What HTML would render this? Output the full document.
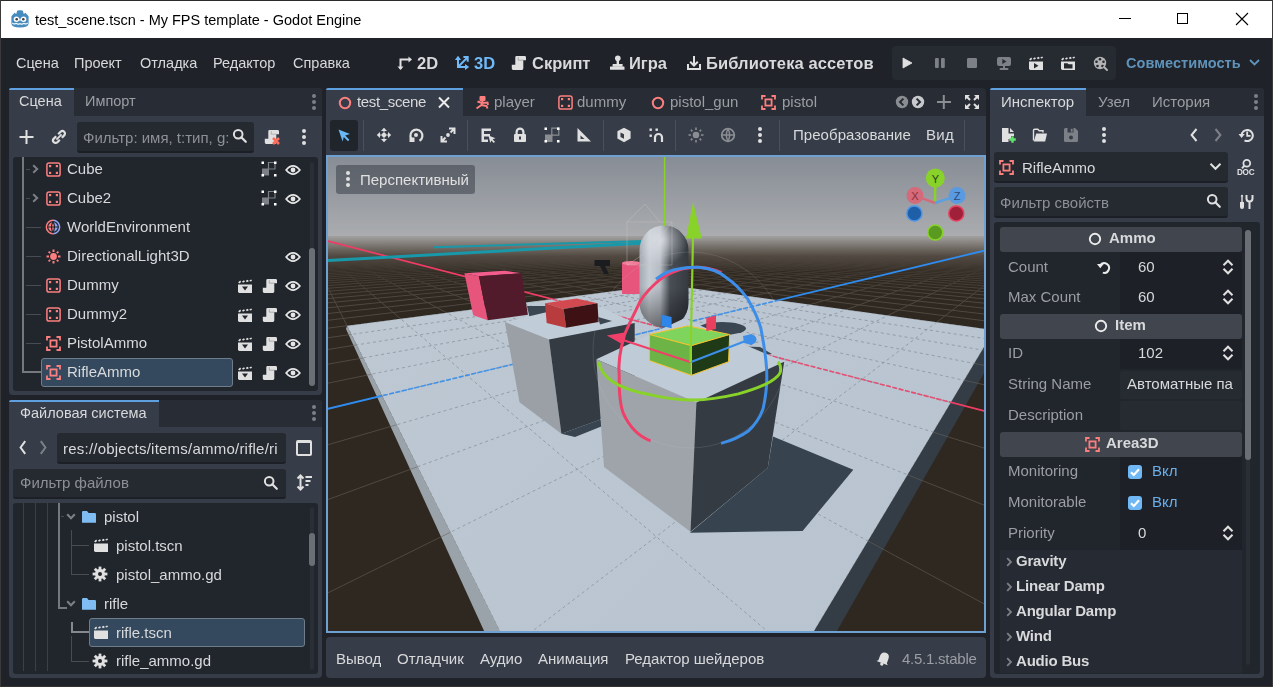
<!DOCTYPE html><html><head><meta charset="utf-8"><style>
html,body{margin:0;padding:0;width:1273px;height:687px;overflow:hidden;background:#1f2228}
body>div,body>svg{position:absolute}
div{position:absolute;box-sizing:border-box}
.t{white-space:pre;line-height:normal;font-family:"Liberation Sans",sans-serif;will-change:transform}
</style></head><body>
<div style="left:0px;top:0px;width:1273px;height:687px;background:#1f2228;border-radius:0px;"></div>
<div style="left:0px;top:0px;width:1273px;height:1px;background:#2b2b2b;border-radius:0px;"></div>
<div style="left:0px;top:1px;width:1273px;height:37px;background:#ffffff;border-radius:0px;"></div>
<div style="left:0px;top:0px;width:1px;height:687px;background:#3a3a3a;border-radius:0px;"></div>
<div style="left:0px;top:686px;width:1273px;height:1px;background:#34322f;border-radius:0px;"></div>
<div style="left:1272px;top:0px;width:1px;height:687px;background:#3a3a3a;border-radius:0px;"></div>
<svg style="position:absolute;left:10px;top:9px;" width="20" height="20" viewBox="0 0 20 20"><path fill="#478cbf" d="M2.5,6 L4.6,3.8 L6.2,5 L7.2,1.8 L9,1.2 L11,1.2 L12.8,1.8 L13.8,5 L15.4,3.8 L17.5,6 L18.6,7.2 V14.5 Q18.6,18.6 10,18.6 Q1.4,18.6 1.4,14.5 V7.2 Z"/>
<circle cx="6.4" cy="10.2" r="2.7" fill="#fff"/><circle cx="13.6" cy="10.2" r="2.7" fill="#fff"/>
<circle cx="6.7" cy="10.3" r="1.3" fill="#414042"/><circle cx="13.3" cy="10.3" r="1.3" fill="#414042"/>
<rect x="9.3" y="9.6" width="1.4" height="2.2" fill="#fff"/>
<path d="M2,13.4 Q4,15 6,13.8 Q8,15.2 10,14 Q12,15.2 14,13.8 Q16,15 18,13.4 V14.6 Q16,16.2 14,15 Q12,16.3 10,15.2 Q8,16.3 6,15 Q4,16.2 2,14.6Z" fill="#fff"/></svg>
<div class="t" style="left:35px;top:11.88px;font-size:14.5px;color:#000000;">test_scene.tscn - My FPS template - Godot Engine</div>
<div style="left:1119px;top:18px;width:12px;height:1px;background:#000;border-radius:0px;"></div>
<div style="left:1177px;top:13px;width:11px;height:11px;background:transparent;border-radius:0px;border:1px solid #000;box-sizing:border-box;"></div>
<svg style="position:absolute;left:1235px;top:12px;" width="14" height="14" viewBox="0 0 14 14"><path d="M1 1 L13 13 M13 1 L1 13" stroke="#000" stroke-width="1.1"/></svg>
<div class="t" style="left:16px;top:55.18px;font-size:14.5px;color:#d8d9db;">Сцена</div>
<div class="t" style="left:74px;top:55.18px;font-size:14.5px;color:#d8d9db;">Проект</div>
<div class="t" style="left:140px;top:55.18px;font-size:14.5px;color:#d8d9db;">Отладка</div>
<div class="t" style="left:213px;top:55.18px;font-size:14.5px;color:#d8d9db;">Редактор</div>
<div class="t" style="left:293px;top:55.18px;font-size:14.5px;color:#d8d9db;">Справка</div>
<svg style="position:absolute;left:396px;top:54px;" width="18" height="18" viewBox="0 0 18 18"><path d="M4.5,15 V5.5 H14" stroke="#e0e0e0" stroke-width="2" fill="none"/><path d="M1.5,12.5 L4.5,16 L7.5,12.5Z" fill="#e0e0e0"/><path d="M12.5,2.5 L16,5.5 L12.5,8.5Z" fill="#e0e0e0"/></svg>
<div class="t" style="left:416.5px;top:53.57px;font-size:16.5px;color:#d8d9db;font-weight:bold;">2D</div>
<svg style="position:absolute;left:452px;top:53px;" width="20" height="20" viewBox="0 0 20 20"><path d="M6,4.5 V14 H15 M6,14 L15.2,4.6 M11.4,4.1 H15.7 V8.7" stroke="#70baf8" stroke-width="2" fill="none"/><path d="M2.9,6.9 L6,2.8 L9.1,6.9Z M13,10.9 L17.2,14 L13,17.1Z" fill="#70baf8"/></svg>
<div class="t" style="left:474px;top:53.57px;font-size:16.5px;color:#70baf8;font-weight:bold;">3D</div>
<svg style="position:absolute;left:511px;top:55px;" width="16" height="16" viewBox="0 0 16 16"><path d="M5.6,1 H13.6 Q15,1 15,2.4 V5.2 H12.3 V13.6 Q12.3,15 10.9,15 H2.2 Q0.8,15 0.8,13.6 V9.8 H4.3 V2.3 Q4.3,1 5.6,1 Z" fill="#e0e0e0"/><path d="M7.3,2.2 V5.2 H12.3" stroke="#1f2228" stroke-width="0.8" fill="none" opacity="0.35"/></svg>
<div class="t" style="left:531.5px;top:53.57px;font-size:16.5px;color:#d8d9db;font-weight:bold;">Скрипт</div>
<svg style="position:absolute;left:609px;top:55px;" width="16" height="16" viewBox="0 0 16 16"><circle cx="8.8" cy="3.3" r="2.8" fill="#e0e0e0"/><rect x="7.6" y="5" width="2.4" height="5" fill="#e0e0e0"/><rect x="3.6" y="9" width="10" height="2.8" rx="0.5" fill="#e0e0e0"/><rect x="1" y="11.4" width="14.5" height="3.4" rx="0.5" fill="#e0e0e0"/></svg>
<div class="t" style="left:629.2px;top:53.57px;font-size:16.5px;color:#d8d9db;font-weight:bold;">Игра</div>
<svg style="position:absolute;left:686px;top:55px;" width="16" height="16" viewBox="0 0 16 16"><path d="M8,1 V10.5 M4.2,6.8 L8,10.6 L11.8,6.8 M2,9 V14 H14 V9" stroke="#e0e0e0" stroke-width="2" fill="none"/></svg>
<div class="t" style="left:706px;top:53.57px;font-size:16.5px;color:#d8d9db;font-weight:bold;letter-spacing:0.1px;">Библиотека ассетов</div>
<div style="left:892px;top:46px;width:224px;height:34px;background:#262a31;border-radius:4px;"></div>
<svg style="position:absolute;left:902px;top:57px;" width="11" height="12" viewBox="0 0 11 12"><path d="M1,1 L10,6 L1,11Z" fill="#e0e0e0" stroke="#e0e0e0" stroke-width="0.8" stroke-linejoin="round"/></svg>
<svg style="position:absolute;left:934px;top:57px;" width="12" height="12" viewBox="0 0 12 12"><rect x="1" y="1" width="3.8" height="10" rx="1" fill="#7d8086"/><rect x="7" y="1" width="3.8" height="10" rx="1" fill="#7d8086"/></svg>
<svg style="position:absolute;left:966px;top:57px;" width="12" height="12" viewBox="0 0 12 12"><rect x="1" y="1" width="10" height="10" rx="1.2" fill="#7d8086"/></svg>
<svg style="position:absolute;left:996px;top:56px;" width="16" height="15" viewBox="0 0 16 15"><rect x="1" y="1" width="14" height="9" rx="2" fill="#7d8086"/><path d="M6.3,3 L10.5,5.5 L6.3,8Z" fill="#262a31"/><rect x="7" y="10" width="2" height="2.5" fill="#7d8086"/><rect x="3.5" y="12" width="9" height="2" rx="1" fill="#7d8086"/></svg>
<svg style="position:absolute;left:1028px;top:56px;" width="16" height="15" viewBox="0 0 16 15"><path d="M1.2,3.2 L3.2,1.6 L4.2,3 L2.2,4.4Z M5,2.4 L7,1.2 L8,2.6 L6,3.8Z M8.8,1.8 L10.8,0.8 L11.8,2.2 L9.8,3.2Z M12.4,1.2 L14.4,0.4 L15,2 L13,2.6Z" fill="#e0e0e0"/><path d="M1,5.6 H15 V14 H2.4 Q1,14 1,12.6 Z" fill="#e0e0e0"/><path d="M6,7 L10.5,9.8 L6,12.6Z" fill="#262a31"/></svg>
<svg style="position:absolute;left:1060px;top:56px;" width="16" height="15" viewBox="0 0 16 15"><path d="M1.2,3.2 L3.2,1.6 L4.2,3 L2.2,4.4Z M5,2.4 L7,1.2 L8,2.6 L6,3.8Z M8.8,1.8 L10.8,0.8 L11.8,2.2 L9.8,3.2Z M12.4,1.2 L14.4,0.4 L15,2 L13,2.6Z" fill="#e0e0e0"/><path d="M1,5.6 H15 V14 H2.4 Q1,14 1,12.6 Z" fill="#e0e0e0"/><path d="M4,7.2 H7.5 L8.5,8.3 H12.5 V12.5 H4Z" fill="#262a31"/></svg>
<svg style="position:absolute;left:1093px;top:56px;" width="16" height="16" viewBox="0 0 16 16"><circle cx="7" cy="7" r="6.2" fill="#b4b4b4"/><circle cx="7" cy="3.3" r="1.3" fill="#262a31"/><circle cx="3.5" cy="5.8" r="1.3" fill="#262a31"/><circle cx="10.5" cy="5.8" r="1.3" fill="#262a31"/><circle cx="4.5" cy="10" r="1.3" fill="#262a31"/><circle cx="9.5" cy="10" r="1.3" fill="#262a31"/><path d="M11,11 L14,14" stroke="#b4b4b4" stroke-width="2" stroke-linecap="round"/></svg>
<div class="t" style="left:1126px;top:54.68px;font-size:14.5px;color:#5f93ba;font-weight:bold;letter-spacing:0.05px;">Совместимость</div>
<svg style="position:absolute;left:1249px;top:59px;" width="11" height="7" viewBox="0 0 11 7"><path d="M1,1 L5.5,5.5 L10,1" stroke="#5f93ba" stroke-width="1.8" fill="none"/></svg>
<div style="left:9px;top:88px;width:313px;height:307px;background:#363c48;border-radius:4px;"></div>
<div style="left:9px;top:88px;width:313px;height:28px;background:#282c34;border-radius:4px;border-radius:4px 4px 0 0;"></div>
<div style="left:9px;top:88px;width:65px;height:28px;background:#363c48;border-radius:0px;border-radius:4px 0 0 0;"></div>
<div style="left:9px;top:88px;width:65px;height:2px;background:#5fa0e0;border-radius:0px;border-radius:2px 0 0 0;"></div>
<div class="t" style="left:19px;top:93.38px;font-size:14.5px;color:#d8d9db;">Сцена</div>
<div class="t" style="left:85px;top:93.38px;font-size:14.5px;color:#9b9ea3;">Импорт</div>
<div style="left:312px;top:94px;width:4px;height:4px;background:#7d8086;border-radius:2.0px;"></div>
<div style="left:312px;top:100px;width:4px;height:4px;background:#7d8086;border-radius:2.0px;"></div>
<div style="left:312px;top:106px;width:4px;height:4px;background:#7d8086;border-radius:2.0px;"></div>
<svg style="position:absolute;left:19px;top:129px;" width="16" height="16" viewBox="0 0 16 16"><path d="M7.5,1 V15 M0.5,8 H14.5" stroke="#e0e0e0" stroke-width="2"/></svg>
<svg style="position:absolute;left:51px;top:129px;" width="16" height="16" viewBox="0 0 16 16"><path d="M5.4,10.6 L10.6,5.4" stroke="#e0e0e0" stroke-width="1.8"/><path d="M7.2,5.2 L9.6,2.8 A2.4,2.4 0 0 1 13.2,6.4 L10.8,8.8" stroke="#e0e0e0" stroke-width="2.2" fill="none"/><path d="M8.8,10.8 L6.4,13.2 A2.4,2.4 0 0 1 2.8,9.6 L5.2,7.2" stroke="#e0e0e0" stroke-width="2.2" fill="none"/></svg>
<div style="left:77px;top:122px;width:177px;height:31px;background:#252a31;border-radius:3px;border-bottom:2px solid #1c1f25;"></div>
<div class="t" style="left:82.5px;top:128.93px;font-size:15px;color:#8d9095;">Фильтр: имя, t:тип, g:</div>
<svg style="position:absolute;left:232px;top:128px;" width="16" height="16" viewBox="0 0 16 16"><circle cx="6.2" cy="6.2" r="4.3" fill="none" stroke="#e0e0e0" stroke-width="2"/><path d="M9.3,9.3 L13.8,13.8" stroke="#e0e0e0" stroke-width="2.2" stroke-linecap="round"/></svg>
<svg style="position:absolute;left:264px;top:129px;" width="16" height="16" viewBox="0 0 16 16"><path d="M5.6,1 H13.6 Q15,1 15,2.4 V5.2 H12.3 V13.6 Q12.3,15 10.9,15 H2.2 Q0.8,15 0.8,13.6 V9.8 H4.3 V2.3 Q4.3,1 5.6,1 Z" fill="#e0e0e0"/><path d="M7.3,2.2 V5.2 H12.3" stroke="#363c48" stroke-width="0.8" fill="none" opacity="0.35"/></svg>
<svg style="position:absolute;left:271px;top:136px;" width="10" height="10" viewBox="0 0 10 10"><path d="M2,2 L8,8 M8,2 L2,8" stroke="#ff6d5a" stroke-width="2.6"/></svg>
<div style="left:302px;top:129px;width:4px;height:4px;background:#e0e0e0;border-radius:2.0px;"></div>
<div style="left:302px;top:135px;width:4px;height:4px;background:#e0e0e0;border-radius:2.0px;"></div>
<div style="left:302px;top:141px;width:4px;height:4px;background:#e0e0e0;border-radius:2.0px;"></div>
<div style="left:13px;top:157px;width:305px;height:234px;background:#21252c;border-radius:3px;"></div>
<div style="left:310px;top:162px;width:4px;height:224px;background:#2a2e36;border-radius:2px;"></div>
<div style="left:309px;top:248px;width:6px;height:138px;background:#6a6e75;border-radius:3px;"></div>
<div style="left:22px;top:157px;width:2px;height:216px;background:#75787d;border-radius:0px;"></div>
<div style="left:26px;top:169px;width:4px;height:1px;background:#474b52;border-radius:0px;"></div>
<svg style="position:absolute;left:31px;top:164px;" width="9" height="10" viewBox="0 0 9 10"><path d="M2.2,1.2 L6.2,5 L2.2,8.8" stroke="#7d8086" stroke-width="2" fill="none"/></svg>
<svg style="position:absolute;left:45.5px;top:161.5px;" width="15" height="15" viewBox="0 0 15 15"><rect x="0.9" y="0.9" width="13.2" height="13.2" rx="2.2" fill="none" stroke="#fc7f7f" stroke-width="1.5"/><rect x="3" y="3" width="2.2" height="2.2" fill="#fc7f7f"/><rect x="9.8" y="3" width="2.2" height="2.2" fill="#fc7f7f"/><rect x="3" y="9.8" width="2.2" height="2.2" fill="#fc7f7f"/><rect x="9.8" y="9.8" width="2.2" height="2.2" fill="#fc7f7f"/></svg>
<div class="t" style="left:67px;top:160.23px;font-size:15px;color:#d8d9db;">Cube</div>
<svg style="position:absolute;left:261px;top:161px;" width="16" height="16" viewBox="0 0 16 16"><rect x="1" y="7.5" width="7" height="7" fill="#7d8086"/><path d="M7.5,1.5 H14 V8 H7.5Z" fill="none" stroke="#7d8086" stroke-width="1.2"/><rect x="0.5" y="0.5" width="2.5" height="2.5" fill="#fff"/><rect x="13" y="0.5" width="2.5" height="2.5" fill="#fff"/><rect x="13" y="13" width="2.5" height="2.5" fill="#fff"/><rect x="0.5" y="13" width="2.5" height="2.5" fill="#fff"/></svg>
<svg style="position:absolute;left:285px;top:162.5px;" width="16" height="14" viewBox="0 0 16 14"><path d="M1.2,7 Q8,-1.2 14.8,7 Q8,15.2 1.2,7 Z" fill="none" stroke="#e6e6e6" stroke-width="1.9"/><circle cx="8" cy="7" r="2.4" fill="#e6e6e6"/></svg>
<div style="left:26px;top:198px;width:4px;height:1px;background:#474b52;border-radius:0px;"></div>
<svg style="position:absolute;left:31px;top:193px;" width="9" height="10" viewBox="0 0 9 10"><path d="M2.2,1.2 L6.2,5 L2.2,8.8" stroke="#7d8086" stroke-width="2" fill="none"/></svg>
<svg style="position:absolute;left:45.5px;top:190.5px;" width="15" height="15" viewBox="0 0 15 15"><rect x="0.9" y="0.9" width="13.2" height="13.2" rx="2.2" fill="none" stroke="#fc7f7f" stroke-width="1.5"/><rect x="3" y="3" width="2.2" height="2.2" fill="#fc7f7f"/><rect x="9.8" y="3" width="2.2" height="2.2" fill="#fc7f7f"/><rect x="3" y="9.8" width="2.2" height="2.2" fill="#fc7f7f"/><rect x="9.8" y="9.8" width="2.2" height="2.2" fill="#fc7f7f"/></svg>
<div class="t" style="left:67px;top:189.23px;font-size:15px;color:#d8d9db;">Cube2</div>
<svg style="position:absolute;left:261px;top:190px;" width="16" height="16" viewBox="0 0 16 16"><rect x="1" y="7.5" width="7" height="7" fill="#7d8086"/><path d="M7.5,1.5 H14 V8 H7.5Z" fill="none" stroke="#7d8086" stroke-width="1.2"/><rect x="0.5" y="0.5" width="2.5" height="2.5" fill="#fff"/><rect x="13" y="0.5" width="2.5" height="2.5" fill="#fff"/><rect x="13" y="13" width="2.5" height="2.5" fill="#fff"/><rect x="0.5" y="13" width="2.5" height="2.5" fill="#fff"/></svg>
<svg style="position:absolute;left:285px;top:191.5px;" width="16" height="14" viewBox="0 0 16 14"><path d="M1.2,7 Q8,-1.2 14.8,7 Q8,15.2 1.2,7 Z" fill="none" stroke="#e6e6e6" stroke-width="1.9"/><circle cx="8" cy="7" r="2.4" fill="#e6e6e6"/></svg>
<div style="left:26px;top:227px;width:15px;height:1px;background:#474b52;border-radius:0px;"></div>
<svg style="position:absolute;left:45px;top:219px;" width="16" height="16" viewBox="0 0 16 16"><path d="M8,0.6 A7.4,7.4 0 0 0 8,15.4Z" fill="#fc7f7f"/><path d="M8,0.6 A7.4,7.4 0 0 1 8,15.4Z" fill="#8da5f3"/><circle cx="8" cy="8" r="5.3" fill="none" stroke="#21252c" stroke-width="1.2"/><path d="M8,2.6 Q5,8 8,13.4 Q11,8 8,2.6 M2.6,8 H13.4" stroke="#21252c" stroke-width="1.2" fill="none"/></svg>
<div class="t" style="left:67px;top:218.23px;font-size:15px;color:#d8d9db;">WorldEnvironment</div>
<div style="left:26px;top:256px;width:15px;height:1px;background:#474b52;border-radius:0px;"></div>
<svg style="position:absolute;left:45.5px;top:248.5px;" width="15" height="15" viewBox="0 0 15 15"><circle cx="7.5" cy="7.5" r="3.4" fill="#fc7f7f"/><path d="M7.5,0.5 V3 M7.5,12 V14.5 M0.5,7.5 H3 M12,7.5 H14.5" stroke="#fc7f7f" stroke-width="2"/><path d="M2.6,2.6 L4.2,4.2 M10.8,10.8 L12.4,12.4 M2.6,12.4 L4.2,10.8 M10.8,4.2 L12.4,2.6" stroke="#fc7f7f" stroke-width="1.8"/></svg>
<div class="t" style="left:67px;top:247.23px;font-size:15px;color:#d8d9db;">DirectionalLight3D</div>
<svg style="position:absolute;left:285px;top:249.5px;" width="16" height="14" viewBox="0 0 16 14"><path d="M1.2,7 Q8,-1.2 14.8,7 Q8,15.2 1.2,7 Z" fill="none" stroke="#e6e6e6" stroke-width="1.9"/><circle cx="8" cy="7" r="2.4" fill="#e6e6e6"/></svg>
<div style="left:26px;top:285px;width:15px;height:1px;background:#474b52;border-radius:0px;"></div>
<svg style="position:absolute;left:45.5px;top:277.5px;" width="15" height="15" viewBox="0 0 15 15"><rect x="0.9" y="0.9" width="13.2" height="13.2" rx="2.2" fill="none" stroke="#fc7f7f" stroke-width="1.5"/><rect x="3" y="3" width="2.2" height="2.2" fill="#fc7f7f"/><rect x="9.8" y="3" width="2.2" height="2.2" fill="#fc7f7f"/><rect x="3" y="9.8" width="2.2" height="2.2" fill="#fc7f7f"/><rect x="9.8" y="9.8" width="2.2" height="2.2" fill="#fc7f7f"/></svg>
<div class="t" style="left:67px;top:276.23px;font-size:15px;color:#d8d9db;">Dummy</div>
<svg style="position:absolute;left:237px;top:278.5px;" width="16" height="15" viewBox="0 0 16 15"><path d="M1.2,3.2 L3.2,1.6 L4.2,3 L2.2,4.4Z M5,2.4 L7,1.2 L8,2.6 L6,3.8Z M8.8,1.8 L10.8,0.8 L11.8,2.2 L9.8,3.2Z M12.4,1.2 L14.4,0.4 L15,2 L13,2.6Z" fill="#e0e0e0"/><path d="M1,5.6 H15 V14 H2.4 Q1,14 1,12.6 Z" fill="#e0e0e0"/><path d="M5,7.6 H11 L8,11.4 Z" fill="#21252c"/></svg>
<svg style="position:absolute;left:261.5px;top:277.5px;" width="16" height="16" viewBox="0 0 16 16"><path d="M5.6,1 H13.6 Q15,1 15,2.4 V5.2 H12.3 V13.6 Q12.3,15 10.9,15 H2.2 Q0.8,15 0.8,13.6 V9.8 H4.3 V2.3 Q4.3,1 5.6,1 Z" fill="#e0e0e0"/><path d="M7.3,2.2 V5.2 H12.3" stroke="#21252c" stroke-width="0.8" fill="none" opacity="0.35"/></svg>
<svg style="position:absolute;left:285px;top:278.5px;" width="16" height="14" viewBox="0 0 16 14"><path d="M1.2,7 Q8,-1.2 14.8,7 Q8,15.2 1.2,7 Z" fill="none" stroke="#e6e6e6" stroke-width="1.9"/><circle cx="8" cy="7" r="2.4" fill="#e6e6e6"/></svg>
<div style="left:26px;top:314px;width:15px;height:1px;background:#474b52;border-radius:0px;"></div>
<svg style="position:absolute;left:45.5px;top:306.5px;" width="15" height="15" viewBox="0 0 15 15"><rect x="0.9" y="0.9" width="13.2" height="13.2" rx="2.2" fill="none" stroke="#fc7f7f" stroke-width="1.5"/><rect x="3" y="3" width="2.2" height="2.2" fill="#fc7f7f"/><rect x="9.8" y="3" width="2.2" height="2.2" fill="#fc7f7f"/><rect x="3" y="9.8" width="2.2" height="2.2" fill="#fc7f7f"/><rect x="9.8" y="9.8" width="2.2" height="2.2" fill="#fc7f7f"/></svg>
<div class="t" style="left:67px;top:305.23px;font-size:15px;color:#d8d9db;">Dummy2</div>
<svg style="position:absolute;left:237px;top:307.5px;" width="16" height="15" viewBox="0 0 16 15"><path d="M1.2,3.2 L3.2,1.6 L4.2,3 L2.2,4.4Z M5,2.4 L7,1.2 L8,2.6 L6,3.8Z M8.8,1.8 L10.8,0.8 L11.8,2.2 L9.8,3.2Z M12.4,1.2 L14.4,0.4 L15,2 L13,2.6Z" fill="#e0e0e0"/><path d="M1,5.6 H15 V14 H2.4 Q1,14 1,12.6 Z" fill="#e0e0e0"/><path d="M5,7.6 H11 L8,11.4 Z" fill="#21252c"/></svg>
<svg style="position:absolute;left:261.5px;top:306.5px;" width="16" height="16" viewBox="0 0 16 16"><path d="M5.6,1 H13.6 Q15,1 15,2.4 V5.2 H12.3 V13.6 Q12.3,15 10.9,15 H2.2 Q0.8,15 0.8,13.6 V9.8 H4.3 V2.3 Q4.3,1 5.6,1 Z" fill="#e0e0e0"/><path d="M7.3,2.2 V5.2 H12.3" stroke="#21252c" stroke-width="0.8" fill="none" opacity="0.35"/></svg>
<svg style="position:absolute;left:285px;top:307.5px;" width="16" height="14" viewBox="0 0 16 14"><path d="M1.2,7 Q8,-1.2 14.8,7 Q8,15.2 1.2,7 Z" fill="none" stroke="#e6e6e6" stroke-width="1.9"/><circle cx="8" cy="7" r="2.4" fill="#e6e6e6"/></svg>
<div style="left:26px;top:343px;width:15px;height:1px;background:#474b52;border-radius:0px;"></div>
<svg style="position:absolute;left:45.5px;top:335.5px;" width="15" height="15" viewBox="0 0 15 15"><path d="M1,4.5 V1 H4.5 M10.5,1 H14 V4.5 M14,10.5 V14 H10.5 M4.5,14 H1 V10.5" stroke="#fc7f7f" stroke-width="1.8" fill="none"/><rect x="4.4" y="4.4" width="6.2" height="6.2" fill="none" stroke="#fc7f7f" stroke-width="1.8"/></svg>
<div class="t" style="left:67px;top:334.23px;font-size:15px;color:#d8d9db;">PistolAmmo</div>
<svg style="position:absolute;left:237px;top:336.5px;" width="16" height="15" viewBox="0 0 16 15"><path d="M1.2,3.2 L3.2,1.6 L4.2,3 L2.2,4.4Z M5,2.4 L7,1.2 L8,2.6 L6,3.8Z M8.8,1.8 L10.8,0.8 L11.8,2.2 L9.8,3.2Z M12.4,1.2 L14.4,0.4 L15,2 L13,2.6Z" fill="#e0e0e0"/><path d="M1,5.6 H15 V14 H2.4 Q1,14 1,12.6 Z" fill="#e0e0e0"/><path d="M5,7.6 H11 L8,11.4 Z" fill="#21252c"/></svg>
<svg style="position:absolute;left:261.5px;top:335.5px;" width="16" height="16" viewBox="0 0 16 16"><path d="M5.6,1 H13.6 Q15,1 15,2.4 V5.2 H12.3 V13.6 Q12.3,15 10.9,15 H2.2 Q0.8,15 0.8,13.6 V9.8 H4.3 V2.3 Q4.3,1 5.6,1 Z" fill="#e0e0e0"/><path d="M7.3,2.2 V5.2 H12.3" stroke="#21252c" stroke-width="0.8" fill="none" opacity="0.35"/></svg>
<svg style="position:absolute;left:285px;top:336.5px;" width="16" height="14" viewBox="0 0 16 14"><path d="M1.2,7 Q8,-1.2 14.8,7 Q8,15.2 1.2,7 Z" fill="none" stroke="#e6e6e6" stroke-width="1.9"/><circle cx="8" cy="7" r="2.4" fill="#e6e6e6"/></svg>
<div style="left:41px;top:358px;width:192px;height:29px;background:#34495e;border-radius:3px;border:1px solid #6f7d8b;"></div>
<div style="left:22px;top:371px;width:20px;height:2px;background:#75787d;border-radius:0px;"></div>
<svg style="position:absolute;left:45.5px;top:364.5px;" width="15" height="15" viewBox="0 0 15 15"><path d="M1,4.5 V1 H4.5 M10.5,1 H14 V4.5 M14,10.5 V14 H10.5 M4.5,14 H1 V10.5" stroke="#fc7f7f" stroke-width="1.8" fill="none"/><rect x="4.4" y="4.4" width="6.2" height="6.2" fill="none" stroke="#fc7f7f" stroke-width="1.8"/></svg>
<div class="t" style="left:67px;top:363.23px;font-size:15px;color:#d8d9db;">RifleAmmo</div>
<svg style="position:absolute;left:237px;top:365.5px;" width="16" height="15" viewBox="0 0 16 15"><path d="M1.2,3.2 L3.2,1.6 L4.2,3 L2.2,4.4Z M5,2.4 L7,1.2 L8,2.6 L6,3.8Z M8.8,1.8 L10.8,0.8 L11.8,2.2 L9.8,3.2Z M12.4,1.2 L14.4,0.4 L15,2 L13,2.6Z" fill="#e0e0e0"/><path d="M1,5.6 H15 V14 H2.4 Q1,14 1,12.6 Z" fill="#e0e0e0"/><path d="M5,7.6 H11 L8,11.4 Z" fill="#21252c"/></svg>
<svg style="position:absolute;left:261.5px;top:364.5px;" width="16" height="16" viewBox="0 0 16 16"><path d="M5.6,1 H13.6 Q15,1 15,2.4 V5.2 H12.3 V13.6 Q12.3,15 10.9,15 H2.2 Q0.8,15 0.8,13.6 V9.8 H4.3 V2.3 Q4.3,1 5.6,1 Z" fill="#e0e0e0"/><path d="M7.3,2.2 V5.2 H12.3" stroke="#21252c" stroke-width="0.8" fill="none" opacity="0.35"/></svg>
<svg style="position:absolute;left:285px;top:365.5px;" width="16" height="14" viewBox="0 0 16 14"><path d="M1.2,7 Q8,-1.2 14.8,7 Q8,15.2 1.2,7 Z" fill="none" stroke="#e6e6e6" stroke-width="1.9"/><circle cx="8" cy="7" r="2.4" fill="#e6e6e6"/></svg>
<div style="left:9px;top:400px;width:313px;height:278px;background:#363c48;border-radius:4px;"></div>
<div style="left:9px;top:400px;width:313px;height:27px;background:#282c34;border-radius:4px;border-radius:4px 4px 0 0;"></div>
<div style="left:9px;top:400px;width:150px;height:27px;background:#363c48;border-radius:0px;border-radius:4px 0 0 0;"></div>
<div style="left:9px;top:400px;width:150px;height:2px;background:#5fa0e0;border-radius:0px;border-radius:2px 0 0 0;"></div>
<div class="t" style="left:20px;top:405.38px;font-size:14.5px;color:#d8d9db;">Файловая система</div>
<div style="left:312px;top:405px;width:4px;height:4px;background:#7d8086;border-radius:2.0px;"></div>
<div style="left:312px;top:411px;width:4px;height:4px;background:#7d8086;border-radius:2.0px;"></div>
<div style="left:312px;top:417px;width:4px;height:4px;background:#7d8086;border-radius:2.0px;"></div>
<svg style="position:absolute;left:18px;top:440px;" width="10" height="16" viewBox="0 0 10 16"><path d="M7.2,1.2 L2.6,7.5 L7.2,13.8" stroke="#e0e0e0" stroke-width="2" fill="none"/></svg>
<svg style="position:absolute;left:38px;top:440px;" width="10" height="16" viewBox="0 0 10 16"><path d="M2.8,1.2 L7.4,7.5 L2.8,13.8" stroke="#7d8086" stroke-width="2" fill="none"/></svg>
<div style="left:57px;top:433px;width:229px;height:31px;background:#252a31;border-radius:3px;border-bottom:2px solid #1c1f25;"></div>
<div class="t" style="left:63px;top:440.03px;font-size:15px;color:#d8d9db;letter-spacing:0.22px;">res://objects/items/ammo/rifle/ri</div>
<div style="left:296px;top:440px;width:16px;height:16px;background:transparent;border-radius:2px;border:2px solid #e0e0e0;border-top-width:3.5px;"></div>
<div style="left:13px;top:469px;width:273px;height:30px;background:#252a31;border-radius:3px;border-bottom:2px solid #1c1f25;"></div>
<div class="t" style="left:19.5px;top:474.43px;font-size:15px;color:#8d9095;">Фильтр файлов</div>
<svg style="position:absolute;left:263px;top:475px;" width="16" height="16" viewBox="0 0 16 16"><circle cx="6.2" cy="6.2" r="4.3" fill="none" stroke="#e0e0e0" stroke-width="2"/><path d="M9.3,9.3 L13.8,13.8" stroke="#e0e0e0" stroke-width="2.2" stroke-linecap="round"/></svg>
<svg style="position:absolute;left:296px;top:474px;" width="17" height="17" viewBox="0 0 17 17"><path d="M4.5,1.5 V15.5 M1.5,4.5 L4.5,1.5 L7.5,4.5 M1.5,12.5 L4.5,15.5 L7.5,12.5 M9.5,3 H16 M9.5,7 H14.5 M9.5,11 H12.5" stroke="#e0e0e0" stroke-width="2" fill="none"/></svg>
<div style="left:13px;top:503px;width:305px;height:171px;background:#21252c;border-radius:3px;"></div>
<div style="left:310px;top:507px;width:4px;height:163px;background:#2a2e36;border-radius:2px;"></div>
<div style="left:309px;top:533px;width:6px;height:33px;background:#6a6e75;border-radius:3px;"></div>
<div style="left:23px;top:503px;width:1px;height:168px;background:#3b3f46;border-radius:0px;"></div>
<div style="left:35px;top:503px;width:1px;height:168px;background:#3b3f46;border-radius:0px;"></div>
<div style="left:47px;top:503px;width:1px;height:168px;background:#3b3f46;border-radius:0px;"></div>
<div style="left:58px;top:503px;width:2px;height:106px;background:#75787d;border-radius:0px;"></div>
<div style="left:58px;top:607px;width:9px;height:2px;background:#75787d;border-radius:0px;"></div>
<div style="left:61px;top:516px;width:3px;height:1px;background:#474b52;border-radius:0px;"></div>
<div style="left:71px;top:530px;width:1px;height:45px;background:#474b52;border-radius:0px;"></div>
<div style="left:71px;top:545px;width:18px;height:1px;background:#474b52;border-radius:0px;"></div>
<div style="left:71px;top:574px;width:18px;height:1px;background:#474b52;border-radius:0px;"></div>
<div style="left:71px;top:622px;width:2px;height:11px;background:#85888d;border-radius:0px;"></div>
<div style="left:71px;top:631px;width:18px;height:2px;background:#85888d;border-radius:0px;"></div>
<div style="left:71px;top:636px;width:1px;height:26px;background:#474b52;border-radius:0px;"></div>
<div style="left:71px;top:661px;width:18px;height:1px;background:#474b52;border-radius:0px;"></div>
<svg style="position:absolute;left:66px;top:512px;" width="10" height="9" viewBox="0 0 10 9"><path d="M1.2,2.2 L5,6.2 L8.8,2.2" stroke="#7d8086" stroke-width="2" fill="none"/></svg>
<svg style="position:absolute;left:81px;top:510px;" width="16" height="14" viewBox="0 0 16 14"><path d="M1,2.2 Q1,1 2.2,1 H6 L7.6,3 H13.8 Q15,3 15,4.2 V12.8 H1 Z" fill="#7fbcf2"/></svg>
<div class="t" style="left:103.8px;top:508.32px;font-size:15px;color:#d8d9db;">pistol</div>
<svg style="position:absolute;left:93px;top:538px;" width="16" height="15" viewBox="0 0 16 15"><path d="M1.2,3.2 L3.2,1.6 L4.2,3 L2.2,4.4Z M5,2.4 L7,1.2 L8,2.6 L6,3.8Z M8.8,1.8 L10.8,0.8 L11.8,2.2 L9.8,3.2Z M12.4,1.2 L14.4,0.4 L15,2 L13,2.6Z" fill="#e0e0e0"/><path d="M1,5.6 H15 V14 H2.4 Q1,14 1,12.6 Z" fill="#e0e0e0"/></svg>
<div class="t" style="left:115.5px;top:537.32px;font-size:15px;color:#d8d9db;">pistol.tscn</div>
<svg style="position:absolute;left:92px;top:566px;" width="16" height="16" viewBox="0 0 16 16"><rect x="6.6" y="0.6" width="2.8" height="3.6" fill="#e0e0e0" transform="rotate(0 8 8)"/><rect x="6.6" y="0.6" width="2.8" height="3.6" fill="#e0e0e0" transform="rotate(45 8 8)"/><rect x="6.6" y="0.6" width="2.8" height="3.6" fill="#e0e0e0" transform="rotate(90 8 8)"/><rect x="6.6" y="0.6" width="2.8" height="3.6" fill="#e0e0e0" transform="rotate(135 8 8)"/><rect x="6.6" y="0.6" width="2.8" height="3.6" fill="#e0e0e0" transform="rotate(180 8 8)"/><rect x="6.6" y="0.6" width="2.8" height="3.6" fill="#e0e0e0" transform="rotate(225 8 8)"/><rect x="6.6" y="0.6" width="2.8" height="3.6" fill="#e0e0e0" transform="rotate(270 8 8)"/><rect x="6.6" y="0.6" width="2.8" height="3.6" fill="#e0e0e0" transform="rotate(315 8 8)"/><circle cx="8" cy="8" r="5" fill="#e0e0e0"/><circle cx="8" cy="8" r="2" fill="#21252c"/></svg>
<div class="t" style="left:115.5px;top:565.82px;font-size:15px;color:#d8d9db;">pistol_ammo.gd</div>
<svg style="position:absolute;left:66px;top:599px;" width="10" height="9" viewBox="0 0 10 9"><path d="M1.2,2.2 L5,6.2 L8.8,2.2" stroke="#7d8086" stroke-width="2" fill="none"/></svg>
<svg style="position:absolute;left:81px;top:597px;" width="16" height="14" viewBox="0 0 16 14"><path d="M1,2.2 Q1,1 2.2,1 H6 L7.6,3 H13.8 Q15,3 15,4.2 V12.8 H1 Z" fill="#7fbcf2"/></svg>
<div class="t" style="left:103.8px;top:594.82px;font-size:15px;color:#d8d9db;">rifle</div>
<div style="left:89px;top:618px;width:216px;height:29px;background:#34495e;border-radius:3px;border:1px solid #6f7d8b;"></div>
<svg style="position:absolute;left:93px;top:625px;" width="16" height="15" viewBox="0 0 16 15"><path d="M1.2,3.2 L3.2,1.6 L4.2,3 L2.2,4.4Z M5,2.4 L7,1.2 L8,2.6 L6,3.8Z M8.8,1.8 L10.8,0.8 L11.8,2.2 L9.8,3.2Z M12.4,1.2 L14.4,0.4 L15,2 L13,2.6Z" fill="#e0e0e0"/><path d="M1,5.6 H15 V14 H2.4 Q1,14 1,12.6 Z" fill="#e0e0e0"/></svg>
<div class="t" style="left:115.5px;top:623.82px;font-size:15px;color:#d8d9db;">rifle.tscn</div>
<svg style="position:absolute;left:92px;top:653px;" width="16" height="16" viewBox="0 0 16 16"><rect x="6.6" y="0.6" width="2.8" height="3.6" fill="#e0e0e0" transform="rotate(0 8 8)"/><rect x="6.6" y="0.6" width="2.8" height="3.6" fill="#e0e0e0" transform="rotate(45 8 8)"/><rect x="6.6" y="0.6" width="2.8" height="3.6" fill="#e0e0e0" transform="rotate(90 8 8)"/><rect x="6.6" y="0.6" width="2.8" height="3.6" fill="#e0e0e0" transform="rotate(135 8 8)"/><rect x="6.6" y="0.6" width="2.8" height="3.6" fill="#e0e0e0" transform="rotate(180 8 8)"/><rect x="6.6" y="0.6" width="2.8" height="3.6" fill="#e0e0e0" transform="rotate(225 8 8)"/><rect x="6.6" y="0.6" width="2.8" height="3.6" fill="#e0e0e0" transform="rotate(270 8 8)"/><rect x="6.6" y="0.6" width="2.8" height="3.6" fill="#e0e0e0" transform="rotate(315 8 8)"/><circle cx="8" cy="8" r="5" fill="#e0e0e0"/><circle cx="8" cy="8" r="2" fill="#21252c"/></svg>
<div class="t" style="left:115.5px;top:652.42px;font-size:15px;color:#d8d9db;">rifle_ammo.gd</div>
<div style="left:326px;top:88px;width:660px;height:28px;background:#282c34;border-radius:4px;border-radius:4px 4px 0 0;"></div>
<div style="left:326px;top:88px;width:137px;height:28px;background:#363c48;border-radius:0px;border-radius:4px 0 0 0;"></div>
<div style="left:326px;top:88px;width:137px;height:2px;background:#5fa0e0;border-radius:0px;border-radius:2px 0 0 0;"></div>
<svg style="position:absolute;left:338px;top:95.5px;" width="14" height="14" viewBox="0 0 14 14"><circle cx="7" cy="7" r="5.2" fill="none" stroke="#fc7f7f" stroke-width="2"/></svg>
<div class="t" style="left:357px;top:93.22px;font-size:15px;color:#d8d9db;letter-spacing:-0.35px;">test_scene</div>
<svg style="position:absolute;left:437px;top:96px;" width="14" height="13" viewBox="0 0 14 13"><path d="M2,1.5 L12,11.5 M12,1.5 L2,11.5" stroke="#ececec" stroke-width="2"/></svg>
<svg style="position:absolute;left:475px;top:94.5px;" width="15" height="15" viewBox="0 0 15 15"><rect x="4.5" y="1" width="6" height="5" rx="1" fill="#fc7f7f"/><path d="M7.5,6 L6.5,10 L1.5,13.5 M6.5,10 L11.5,11 L12.5,13.5 M2.5,6.5 L7,8 L12.5,7.5 L13,10" stroke="#fc7f7f" stroke-width="2" fill="none"/></svg>
<div class="t" style="left:494.4px;top:93.22px;font-size:15px;color:#9b9ea3;">player</div>
<svg style="position:absolute;left:558px;top:94.5px;" width="15" height="15" viewBox="0 0 15 15"><rect x="0.9" y="0.9" width="13.2" height="13.2" rx="2.2" fill="none" stroke="#fc7f7f" stroke-width="1.5"/><rect x="3" y="3" width="2.2" height="2.2" fill="#fc7f7f"/><rect x="9.8" y="3" width="2.2" height="2.2" fill="#fc7f7f"/><rect x="3" y="9.8" width="2.2" height="2.2" fill="#fc7f7f"/><rect x="9.8" y="9.8" width="2.2" height="2.2" fill="#fc7f7f"/></svg>
<div class="t" style="left:577.3px;top:93.22px;font-size:15px;color:#9b9ea3;">dummy</div>
<svg style="position:absolute;left:651px;top:95.5px;" width="14" height="14" viewBox="0 0 14 14"><circle cx="7" cy="7" r="5.2" fill="none" stroke="#fc7f7f" stroke-width="2"/></svg>
<div class="t" style="left:670px;top:93.22px;font-size:15px;color:#9b9ea3;">pistol_gun</div>
<svg style="position:absolute;left:761px;top:94.5px;" width="15" height="15" viewBox="0 0 15 15"><path d="M1,4.5 V1 H4.5 M10.5,1 H14 V4.5 M14,10.5 V14 H10.5 M4.5,14 H1 V10.5" stroke="#fc7f7f" stroke-width="1.8" fill="none"/><rect x="4.4" y="4.4" width="6.2" height="6.2" fill="none" stroke="#fc7f7f" stroke-width="1.8"/></svg>
<div class="t" style="left:781.6px;top:93.22px;font-size:15px;color:#9b9ea3;">pistol</div>
<svg style="position:absolute;left:895px;top:95px;" width="14" height="14" viewBox="0 0 14 14"><circle cx="7" cy="7" r="6.2" fill="#8a8d92"/><path d="M8.4,3.6 L5,7 L8.4,10.4" stroke="#262a32" stroke-width="2" fill="none"/></svg>
<svg style="position:absolute;left:911px;top:95px;" width="14" height="14" viewBox="0 0 14 14"><circle cx="7" cy="7" r="6.2" fill="#c8c9cc"/><path d="M5.6,3.6 L9,7 L5.6,10.4" stroke="#262a32" stroke-width="2" fill="none"/></svg>
<svg style="position:absolute;left:936px;top:94px;" width="16" height="16" viewBox="0 0 16 16"><path d="M7.8,1 V15 M1,8 H15" stroke="#8a8d92" stroke-width="2"/></svg>
<svg style="position:absolute;left:964px;top:94px;" width="16" height="16" viewBox="0 0 16 16"><path d="M1,1 H6 L1,6Z M15,1 H10 L15,6Z M1,15 H6 L1,10Z M15,15 H10 L15,10Z" fill="#e0e0e0"/><path d="M2,2 L6,6 M14,2 L10,6 M2,14 L6,10 M14,14 L10,10" stroke="#e0e0e0" stroke-width="2"/></svg>
<div style="left:326px;top:116px;width:660px;height:40px;background:#363c48;border-radius:0px;"></div>
<div style="left:330px;top:120px;width:28px;height:31px;background:#20242b;border-radius:3px;"></div>
<svg style="position:absolute;left:336px;top:127px;" width="16" height="16" viewBox="0 0 16 16"><path d="M2.5,2.5 L14,7 L9.2,8.6 L13.4,12.8 L12,14.2 L7.8,10 L6.6,14.5Z" fill="#6ab7f5"/></svg>
<div style="left:363px;top:120px;width:1px;height:31px;background:#4b515c;border-radius:0px;"></div>
<div style="left:467px;top:120px;width:1px;height:31px;background:#4b515c;border-radius:0px;"></div>
<div style="left:603px;top:120px;width:1px;height:31px;background:#4b515c;border-radius:0px;"></div>
<div style="left:675px;top:120px;width:1px;height:31px;background:#4b515c;border-radius:0px;"></div>
<div style="left:779px;top:120px;width:1px;height:31px;background:#4b515c;border-radius:0px;"></div>
<div style="left:964px;top:120px;width:1px;height:31px;background:#4b515c;border-radius:0px;"></div>
<svg style="position:absolute;left:376px;top:127px;" width="16" height="16" viewBox="0 0 16 16"><circle cx="8" cy="8" r="2.2" fill="#e0e0e0"/><path d="M8,0.8 L11,4 H5Z M8,15.2 L11,12 H5Z M0.8,8 L4,5 V11Z M15.2,8 L12,5 V11Z" fill="#e0e0e0"/><path d="M8,3.5 V12.5 M3.5,8 H12.5" stroke="#e0e0e0" stroke-width="1"/></svg>
<svg style="position:absolute;left:408px;top:127px;" width="16" height="16" viewBox="0 0 16 16"><path d="M5,13.6 A6,6 0 1 1 11.5,13.8" stroke="#e0e0e0" stroke-width="2.2" fill="none"/><circle cx="8" cy="8" r="2" fill="#e0e0e0"/><path d="M1.5,10.5 H6.5 V15 H1.5Z" fill="#e0e0e0"/></svg>
<svg style="position:absolute;left:440px;top:127px;" width="16" height="16" viewBox="0 0 16 16"><path d="M9,1.5 H14.5 V7 M14.5,1.5 L10.5,5.5 M7,14.5 H1.5 V9 M1.5,14.5 L5.5,10.5" stroke="#e0e0e0" stroke-width="2" fill="none"/><circle cx="8" cy="8" r="1.9" fill="#e0e0e0"/></svg>
<svg style="position:absolute;left:480px;top:127px;" width="16" height="16" viewBox="0 0 16 16"><path d="M1.5,1.5 H11 V4 H4 V7 H10 V9.5 H4 V12.5 H8 V15 H1.5Z" fill="#e0e0e0"/><path d="M8.5,8.5 L15.5,11.2 L12.6,12.3 L15,14.7 L13.8,15.9 L11.4,13.5 L10.3,16Z" fill="#e0e0e0"/></svg>
<svg style="position:absolute;left:512px;top:127px;" width="16" height="16" viewBox="0 0 16 16"><path d="M4.6,7 V5 A3.4,3.4 0 0 1 11.4,5 V7" stroke="#e0e0e0" stroke-width="2.2" fill="none"/><rect x="2" y="7" width="12" height="8" rx="1" fill="#e0e0e0"/><rect x="7" y="9.5" width="2" height="3" fill="#363c48"/></svg>
<svg style="position:absolute;left:544px;top:127px;" width="16" height="16" viewBox="0 0 16 16"><rect x="1" y="7.5" width="7.5" height="7.5" fill="#8a8d92"/><path d="M7.8,1.2 H14.8 V8.2 H7.8Z" fill="none" stroke="#8a8d92" stroke-width="1.2"/><rect x="0.5" y="0.5" width="2.5" height="2.5" fill="#fff"/><rect x="13" y="0.5" width="2.5" height="2.5" fill="#fff"/><rect x="13" y="13" width="2.5" height="2.5" fill="#fff"/><rect x="0.5" y="13" width="2.5" height="2.5" fill="#fff"/></svg>
<svg style="position:absolute;left:576px;top:127px;" width="16" height="16" viewBox="0 0 16 16"><path d="M1.5,1 L15,14.5 H1.5Z" fill="#e0e0e0"/><path d="M4.5,8.5 L8.5,12 H4.5Z" fill="#363c48"/></svg>
<svg style="position:absolute;left:616px;top:127px;" width="16" height="16" viewBox="0 0 16 16"><path d="M8,0.8 L14.6,4.2 V11.6 L8,15.2 L1.4,11.6 V4.2Z" fill="#e0e0e0"/><path d="M4.5,5.5 L8,7.2 V11.8 L4.5,10Z" fill="#363c48"/></svg>
<svg style="position:absolute;left:648px;top:127px;" width="16" height="16" viewBox="0 0 16 16"><path d="M7,15 V10.5 A3.5,3.5 0 0 1 14,10.5 V15" stroke="#e0e0e0" stroke-width="2.2" fill="none"/><rect x="1.5" y="1.5" width="2.4" height="2.4" fill="#e0e0e0"/><rect x="7.5" y="1.5" width="2.4" height="2.4" fill="#e0e0e0"/><rect x="1.5" y="7.5" width="2.4" height="2.4" fill="#e0e0e0"/></svg>
<svg style="position:absolute;left:688px;top:127px;" width="16" height="16" viewBox="0 0 16 16"><circle cx="8" cy="8" r="3.3" fill="#8a8d92"/><path d="M8,0.5 V3 M8,13 V15.5 M0.5,8 H3 M13,8 H15.5 M2.8,2.8 L4.4,4.4 M11.6,11.6 L13.2,13.2 M2.8,13.2 L4.4,11.6 M11.6,4.4 L13.2,2.8" stroke="#8a8d92" stroke-width="1.6"/></svg>
<svg style="position:absolute;left:720px;top:127px;" width="16" height="16" viewBox="0 0 16 16"><circle cx="8" cy="8" r="6.3" fill="none" stroke="#8a8d92" stroke-width="1.8"/><path d="M8,2 Q4.6,8 8,14 Q11.4,8 8,2 M2,8 H14" stroke="#8a8d92" stroke-width="1.5" fill="none"/></svg>
<div style="left:758px;top:127px;width:4px;height:4px;background:#e0e0e0;border-radius:2.0px;"></div>
<div style="left:758px;top:133px;width:4px;height:4px;background:#e0e0e0;border-radius:2.0px;"></div>
<div style="left:758px;top:139px;width:4px;height:4px;background:#e0e0e0;border-radius:2.0px;"></div>
<div class="t" style="left:792.5px;top:126.42px;font-size:15px;color:#d8d9db;letter-spacing:0.05px;">Преобразование</div>
<div class="t" style="left:926.3px;top:126.42px;font-size:15px;color:#d8d9db;letter-spacing:0.3px;">Вид</div>
<div style="left:326px;top:637px;width:660px;height:41px;background:#363c48;border-radius:4px;"></div>
<div class="t" style="left:336px;top:649.92px;font-size:15px;color:#d8d9db;">Вывод</div>
<div class="t" style="left:397px;top:649.92px;font-size:15px;color:#d8d9db;">Отладчик</div>
<div class="t" style="left:480px;top:649.92px;font-size:15px;color:#d8d9db;">Аудио</div>
<div class="t" style="left:538px;top:649.92px;font-size:15px;color:#d8d9db;">Анимация</div>
<div class="t" style="left:625px;top:649.92px;font-size:15px;color:#d8d9db;">Редактор шейдеров</div>
<svg style="position:absolute;left:876px;top:650px;" width="16" height="16" viewBox="0 0 16 16"><g transform="rotate(20 8 8)"><path d="M3.5,12 V7.5 Q3.5,2.5 8,2.5 Q12.5,2.5 12.5,7.5 V12 L14,13.5 H2 Z" fill="#e0e0e0"/><circle cx="8" cy="14.5" r="1.6" fill="#e0e0e0"/></g></svg>
<div class="t" style="left:901.5px;top:649.92px;font-size:15px;color:#9b9ea3;letter-spacing:-0.25px;">4.5.1.stable</div>
<div style="left:990px;top:88px;width:274px;height:590px;background:#363c48;border-radius:4px;"></div>
<div style="left:990px;top:88px;width:274px;height:28px;background:#282c34;border-radius:4px;border-radius:4px 4px 0 0;"></div>
<div style="left:990px;top:88px;width:96px;height:28px;background:#363c48;border-radius:0px;border-radius:4px 0 0 0;"></div>
<div style="left:990px;top:88px;width:96px;height:2px;background:#5fa0e0;border-radius:0px;border-radius:2px 0 0 0;"></div>
<div class="t" style="left:1001.3px;top:92.92px;font-size:15px;color:#d8d9db;">Инспектор</div>
<div class="t" style="left:1097.7px;top:92.92px;font-size:15px;color:#9b9ea3;">Узел</div>
<div class="t" style="left:1151.7px;top:92.92px;font-size:15px;color:#9b9ea3;">История</div>
<div style="left:1254px;top:94px;width:4px;height:4px;background:#7d8086;border-radius:2.0px;"></div>
<div style="left:1254px;top:100px;width:4px;height:4px;background:#7d8086;border-radius:2.0px;"></div>
<div style="left:1254px;top:106px;width:4px;height:4px;background:#7d8086;border-radius:2.0px;"></div>
<svg style="position:absolute;left:1001px;top:127px;" width="16" height="16" viewBox="0 0 16 16"><path d="M1,1 H7.5 V6.5 H13 V9 H10 V12 H7.5 V15 H1Z" fill="#e0e0e0"/><path d="M9,1 L13,5 H9Z" fill="#e0e0e0"/><path d="M11.5,9.2 V15.8 M8.2,12.5 H14.8" stroke="#5fe36a" stroke-width="2.4"/></svg>
<svg style="position:absolute;left:1032px;top:128px;" width="16" height="15" viewBox="0 0 16 15"><path d="M1.5,12.5 V2.6 Q1.5,1.2 2.8,1.2 H5.8 L7.2,2.8 H11 V4.5" stroke="#e0e0e0" stroke-width="1.4" fill="none"/><path d="M4.2,5.5 H15 L13.2,13.6 H1.8Z" fill="#e0e0e0"/></svg>
<svg style="position:absolute;left:1063px;top:127px;" width="16" height="16" viewBox="0 0 16 16"><path d="M1,2.5 Q1,1 2.5,1 H12 L15,4 V13.5 Q15,15 13.5,15 H2.5 Q1,15 1,13.5Z" fill="#7d8086"/><rect x="4.5" y="1" width="6" height="4.5" fill="#363c48"/><rect x="7.8" y="1.8" width="1.8" height="3" fill="#7d8086"/><circle cx="8" cy="10.5" r="2" fill="#363c48"/></svg>
<div style="left:1102px;top:127px;width:4px;height:4px;background:#e0e0e0;border-radius:2.0px;"></div>
<div style="left:1102px;top:133px;width:4px;height:4px;background:#e0e0e0;border-radius:2.0px;"></div>
<div style="left:1102px;top:139px;width:4px;height:4px;background:#e0e0e0;border-radius:2.0px;"></div>
<svg style="position:absolute;left:1189px;top:127px;" width="10" height="16" viewBox="0 0 10 16"><path d="M7.5,2 L2.6,8 L7.5,14" stroke="#e0e0e0" stroke-width="2" fill="none"/></svg>
<svg style="position:absolute;left:1213px;top:127px;" width="10" height="16" viewBox="0 0 10 16"><path d="M2.5,2 L7.4,8 L2.5,14" stroke="#7d8086" stroke-width="2" fill="none"/></svg>
<svg style="position:absolute;left:1238px;top:127px;" width="16" height="16" viewBox="0 0 16 16"><path d="M3.6,8.5 A5.6,5.6 0 1 1 6.5,13.4" stroke="#e0e0e0" stroke-width="2" fill="none"/><path d="M0.5,7 H6.8 L3.6,11Z" fill="#e0e0e0"/><path d="M9.2,4.5 V8.8 H12.5" stroke="#e0e0e0" stroke-width="1.8" fill="none"/></svg>
<div style="left:994px;top:152px;width:234px;height:31px;background:#252a31;border-radius:3px;border-bottom:2px solid #1c1f25;"></div>
<svg style="position:absolute;left:999px;top:159.5px;" width="15" height="15" viewBox="0 0 15 15"><path d="M1,4.5 V1 H4.5 M10.5,1 H14 V4.5 M14,10.5 V14 H10.5 M4.5,14 H1 V10.5" stroke="#fc7f7f" stroke-width="1.8" fill="none"/><rect x="4.4" y="4.4" width="6.2" height="6.2" fill="none" stroke="#fc7f7f" stroke-width="1.8"/></svg>
<div class="t" style="left:1022px;top:158.93px;font-size:15px;color:#d8d9db;">RifleAmmo</div>
<svg style="position:absolute;left:1209px;top:162px;" width="13" height="9" viewBox="0 0 13 9"><path d="M1.5,1.8 L6.5,6.8 L11.5,1.8" stroke="#e0e0e0" stroke-width="2" fill="none"/></svg>
<svg style="position:absolute;left:1236px;top:156px;" width="18" height="14" viewBox="0 0 18 14"><circle cx="10.8" cy="7.2" r="3.4" fill="none" stroke="#e0e0e0" stroke-width="1.8"/><path d="M8.4,9.6 L6,12.3" stroke="#e0e0e0" stroke-width="2"/></svg>
<div class="t" style="left:1237.3px;top:167.88px;font-size:8.2px;color:#e0e0e0;font-weight:bold;letter-spacing:-0.3px;">DOC</div>
<div style="left:994px;top:187px;width:234px;height:31px;background:#252a31;border-radius:3px;border-bottom:2px solid #1c1f25;"></div>
<div class="t" style="left:1000px;top:194.43px;font-size:15px;color:#8d9095;">Фильтр свойств</div>
<svg style="position:absolute;left:1206px;top:193px;" width="16" height="16" viewBox="0 0 16 16"><circle cx="6.2" cy="6.2" r="4.3" fill="none" stroke="#e0e0e0" stroke-width="2"/><path d="M9.3,9.3 L13.8,13.8" stroke="#e0e0e0" stroke-width="2.2" stroke-linecap="round"/></svg>
<svg style="position:absolute;left:1238px;top:194px;" width="16" height="16" viewBox="0 0 16 16"><path d="M4,1 V8" stroke="#e0e0e0" stroke-width="1.4"/><path d="M2.6,2.5 L4,0.5 L5.4,2.5Z" fill="#e0e0e0"/><path d="M2,8 H6 V13 Q6,15 4,15 Q2,15 2,13Z" fill="#e0e0e0"/><path d="M11.5,7 V15" stroke="#e0e0e0" stroke-width="2"/><path d="M8.5,1 V4.5 Q8.5,7.5 11.5,7.5 Q14.5,7.5 14.5,4.5 V1" stroke="#e0e0e0" stroke-width="2" fill="none"/></svg>
<div style="left:994px;top:222px;width:266px;height:452px;background:#21252c;border-radius:3px;"></div>
<div style="left:1000px;top:227px;width:242px;height:25px;background:#40454e;border-radius:3px;"></div>
<svg style="position:absolute;left:1088px;top:232px;" width="14" height="14" viewBox="0 0 14 14"><circle cx="7" cy="7" r="5.2" fill="none" stroke="#ececec" stroke-width="1.9"/></svg>
<div class="t" style="left:1108.8px;top:229.43px;font-size:15px;color:#d8d9db;font-weight:bold;">Ammo</div>
<div style="left:1120px;top:252px;width:122px;height:62px;background:#1d2127;border-radius:0px;"></div>
<div class="t" style="left:1008.4px;top:257.53px;font-size:15px;color:#9b9ea3;">Count</div>
<svg style="position:absolute;left:1096px;top:259px;" width="16" height="16" viewBox="0 0 16 16"><path d="M4.5,6 A4.8,4.8 0 1 1 6.8,13.6" stroke="#ececec" stroke-width="2" fill="none"/><path d="M1,5 H7.6 L4.3,9.2Z" fill="#ececec"/></svg>
<div class="t" style="left:1137.5px;top:257.53px;font-size:15px;color:#d8d9db;">60</div>
<svg style="position:absolute;left:1222px;top:259px;" width="12" height="16" viewBox="0 0 12 16"><path d="M1.5,6.2 L6,1.7 L10.5,6.2 M1.5,9.8 L6,14.3 L10.5,9.8" stroke="#e0e0e0" stroke-width="2" fill="none"/></svg>
<div class="t" style="left:1008.4px;top:288.23px;font-size:15px;color:#9b9ea3;">Max Count</div>
<div class="t" style="left:1137.5px;top:288.23px;font-size:15px;color:#d8d9db;">60</div>
<svg style="position:absolute;left:1222px;top:289px;" width="12" height="16" viewBox="0 0 12 16"><path d="M1.5,6.2 L6,1.7 L10.5,6.2 M1.5,9.8 L6,14.3 L10.5,9.8" stroke="#e0e0e0" stroke-width="2" fill="none"/></svg>
<div style="left:1000px;top:314px;width:242px;height:25px;background:#40454e;border-radius:3px;"></div>
<svg style="position:absolute;left:1094px;top:319px;" width="14" height="14" viewBox="0 0 14 14"><circle cx="7" cy="7" r="5.2" fill="none" stroke="#ececec" stroke-width="1.9"/></svg>
<div class="t" style="left:1114.9px;top:316.32px;font-size:15px;color:#d8d9db;font-weight:bold;">Item</div>
<div style="left:1120px;top:339px;width:122px;height:30px;background:#1d2127;border-radius:0px;"></div>
<div class="t" style="left:1008.4px;top:344.12px;font-size:15px;color:#9b9ea3;">ID</div>
<div class="t" style="left:1137.5px;top:344.12px;font-size:15px;color:#d8d9db;">102</div>
<svg style="position:absolute;left:1222px;top:345px;" width="12" height="16" viewBox="0 0 12 16"><path d="M1.5,6.2 L6,1.7 L10.5,6.2 M1.5,9.8 L6,14.3 L10.5,9.8" stroke="#e0e0e0" stroke-width="2" fill="none"/></svg>
<div class="t" style="left:1008.4px;top:375.43px;font-size:15px;color:#9b9ea3;">String Name</div>
<div style="left:1120px;top:371px;width:122px;height:28px;background:#262b32;border-radius:2px;"></div>
<div class="t" style="left:1127.2px;top:375.43px;font-size:15px;color:#d8d9db;">Автоматные па</div>
<div class="t" style="left:1008.4px;top:406.12px;font-size:15px;color:#9b9ea3;">Description</div>
<div style="left:1120px;top:401px;width:122px;height:29px;background:#262b32;border-radius:2px;"></div>
<div style="left:1000px;top:432px;width:242px;height:25px;background:#40454e;border-radius:3px;"></div>
<svg style="position:absolute;left:1084.5px;top:437px;" width="15" height="15" viewBox="0 0 15 15"><path d="M1,4.5 V1 H4.5 M10.5,1 H14 V4.5 M14,10.5 V14 H10.5 M4.5,14 H1 V10.5" stroke="#fc7f7f" stroke-width="1.8" fill="none"/><rect x="4.4" y="4.4" width="6.2" height="6.2" fill="none" stroke="#fc7f7f" stroke-width="1.8"/></svg>
<div class="t" style="left:1106px;top:433.73px;font-size:15px;color:#d8d9db;font-weight:bold;">Area3D</div>
<div style="left:1120px;top:457px;width:122px;height:93px;background:#1d2127;border-radius:0px;"></div>
<div class="t" style="left:1008.4px;top:462.43px;font-size:15px;color:#9b9ea3;">Monitoring</div>
<div style="left:1128px;top:465px;width:14px;height:14px;background:#70b8f5;border-radius:3px;"></div>
<svg style="position:absolute;left:1128px;top:465px;" width="14" height="14" viewBox="0 0 14 14"><path d="M3,7.2 L5.8,10 L11,4.2" stroke="#fff" stroke-width="2.2" fill="none"/></svg>
<div class="t" style="left:1151.6px;top:462.43px;font-size:15px;color:#6aaeea;">Вкл</div>
<div class="t" style="left:1008.4px;top:493.23px;font-size:15px;color:#9b9ea3;">Monitorable</div>
<div style="left:1128px;top:496px;width:14px;height:14px;background:#70b8f5;border-radius:3px;"></div>
<svg style="position:absolute;left:1128px;top:496px;" width="14" height="14" viewBox="0 0 14 14"><path d="M3,7.2 L5.8,10 L11,4.2" stroke="#fff" stroke-width="2.2" fill="none"/></svg>
<div class="t" style="left:1151.6px;top:493.23px;font-size:15px;color:#6aaeea;">Вкл</div>
<div class="t" style="left:1008.4px;top:524.12px;font-size:15px;color:#9b9ea3;">Priority</div>
<div class="t" style="left:1137.5px;top:524.12px;font-size:15px;color:#d8d9db;">0</div>
<svg style="position:absolute;left:1222px;top:525px;" width="12" height="16" viewBox="0 0 12 16"><path d="M1.5,6.2 L6,1.7 L10.5,6.2 M1.5,9.8 L6,14.3 L10.5,9.8" stroke="#e0e0e0" stroke-width="2" fill="none"/></svg>
<div style="left:1000px;top:550px;width:242px;height:123px;background:#262a32;border-radius:0px;"></div>
<svg style="position:absolute;left:1004.5px;top:557.1px;" width="9" height="10" viewBox="0 0 9 10"><path d="M2.2,1.2 L6,5 L2.2,8.8" stroke="#7d8086" stroke-width="1.8" fill="none"/></svg>
<div class="t" style="left:1016.4px;top:552.02px;font-size:15px;color:#d8d9db;font-weight:bold;letter-spacing:-0.2px;">Gravity</div>
<svg style="position:absolute;left:1004.5px;top:582.0500000000001px;" width="9" height="10" viewBox="0 0 9 10"><path d="M2.2,1.2 L6,5 L2.2,8.8" stroke="#7d8086" stroke-width="1.8" fill="none"/></svg>
<div class="t" style="left:1016.4px;top:576.98px;font-size:15px;color:#d8d9db;font-weight:bold;letter-spacing:-0.2px;">Linear Damp</div>
<svg style="position:absolute;left:1004.5px;top:607.0px;" width="9" height="10" viewBox="0 0 9 10"><path d="M2.2,1.2 L6,5 L2.2,8.8" stroke="#7d8086" stroke-width="1.8" fill="none"/></svg>
<div class="t" style="left:1016.4px;top:601.92px;font-size:15px;color:#d8d9db;font-weight:bold;letter-spacing:-0.2px;">Angular Damp</div>
<svg style="position:absolute;left:1004.5px;top:631.95px;" width="9" height="10" viewBox="0 0 9 10"><path d="M2.2,1.2 L6,5 L2.2,8.8" stroke="#7d8086" stroke-width="1.8" fill="none"/></svg>
<div class="t" style="left:1016.4px;top:626.88px;font-size:15px;color:#d8d9db;font-weight:bold;letter-spacing:-0.2px;">Wind</div>
<svg style="position:absolute;left:1004.5px;top:656.9px;" width="9" height="10" viewBox="0 0 9 10"><path d="M2.2,1.2 L6,5 L2.2,8.8" stroke="#7d8086" stroke-width="1.8" fill="none"/></svg>
<div class="t" style="left:1016.4px;top:651.82px;font-size:15px;color:#d8d9db;font-weight:bold;letter-spacing:-0.2px;">Audio Bus</div>
<div style="left:1246px;top:230px;width:4px;height:435px;background:#2a2e36;border-radius:2px;"></div>
<div style="left:1245px;top:230px;width:6px;height:230px;background:#6a6e75;border-radius:3px;"></div>
<svg style="position:absolute;left:326px;top:155px" width="660" height="478" viewBox="326 155 660 478"><defs>
<linearGradient id="sky" x1="0" y1="0" x2="0" y2="1"><stop offset="0" stop-color="#868c95"/><stop offset="1" stop-color="#aaacaf"/></linearGradient>
<linearGradient id="fog" x1="0" y1="0" x2="0" y2="1"><stop offset="0" stop-color="#a2a1a0"/><stop offset="0.22" stop-color="#85817c"/><stop offset="0.6" stop-color="#4e463e"/><stop offset="1" stop-color="#2f2820"/></linearGradient>
<linearGradient id="caps" x1="0" y1="0" x2="1" y2="0"><stop offset="0" stop-color="#a4aab2"/><stop offset="0.2" stop-color="#c6ccd3"/><stop offset="0.42" stop-color="#b6bcc4"/><stop offset="0.62" stop-color="#4a4f56"/><stop offset="1" stop-color="#353a41"/></linearGradient><radialGradient id="capsx" gradientUnits="userSpaceOnUse" cx="662" cy="240" r="26"><stop offset="0" stop-color="#e8ecf0" stop-opacity="0.7"/><stop offset="1" stop-color="#e8ecf0" stop-opacity="0"/></radialGradient><linearGradient id="capv" x1="0" y1="0" x2="0" y2="1"><stop offset="0" stop-color="#000" stop-opacity="0"/><stop offset="0.6" stop-color="#000" stop-opacity="0"/><stop offset="1" stop-color="#000" stop-opacity="0.45"/></linearGradient>
<linearGradient id="plane" x1="0" y1="0" x2="1" y2="1"><stop offset="0" stop-color="#bdc8d3"/><stop offset="1" stop-color="#b6c2ce"/></linearGradient>
<linearGradient id="gm" gradientUnits="userSpaceOnUse" x1="0" y1="240" x2="0" y2="300"><stop offset="0" stop-color="#000"/><stop offset="1" stop-color="#fff"/></linearGradient>
<mask id="gmask" maskUnits="userSpaceOnUse" x="326" y="155" width="660" height="478"><rect x="326" y="155" width="660" height="478" fill="url(#gm)"/></mask>
<clipPath id="gclip"><path clip-rule="evenodd" d="M326,155 H986 V633 H326 Z M338,326 L665,283 L998,328 L1010,345 L860,633 L468,633 Z"/></clipPath><clipPath id="pclip"><polygon points="347,325.7 665,284.5 994.1,330.2 642.9,917"/></clipPath><clipPath id="npclip"><path clip-rule="evenodd" d="M326,155 H986 V633 H326 Z M347,325.7 L665,284.5 L994.1,330.2 L642.9,917 Z"/></clipPath>
</defs><rect x="326" y="155" width="660" height="81" fill="url(#sky)"/><rect x="326" y="236" width="660" height="34" fill="url(#fog)"/><rect x="326" y="270" width="660" height="363" fill="#2f2820"/><polygon points="347,325.7 346,329 485,633 501,633" fill="#9aa2aa" /><polygon points="994,330 813,633 835.8,633 1000,345" fill="#343d46" /><path d="M301.2,234.1L2300.7,280.3M301.2,234.1L2300.7,281.0M301.2,234.1L2300.6,281.7M301.2,234.1L2300.6,282.4M301.2,234.1L2300.6,283.2M301.2,234.1L2300.6,284.0M301.2,234.1L2300.6,284.8M301.2,234.1L2300.5,285.7M301.2,234.1L2300.5,286.5M301.2,234.1L2300.5,287.4M301.2,234.1L2300.5,288.4M301.2,234.1L2300.4,289.4M301.2,234.1L2300.4,290.4M301.2,234.1L2300.4,291.4M301.2,234.1L2300.3,292.5M301.2,234.1L2300.3,293.6M301.2,234.1L2300.3,294.8M301.2,234.1L2300.2,296.0M301.2,234.1L2300.2,297.3M301.2,234.1L2300.2,298.6M301.2,234.1L2300.1,300.0M301.2,234.1L2300.1,301.4M301.2,234.1L2300.0,303.0M301.2,234.1L2300.0,304.5M301.2,234.1L2299.9,306.2M301.2,234.1L2299.8,307.9M301.2,234.1L2299.8,309.8M301.2,234.1L2299.7,311.7M301.2,234.1L2299.6,313.7M301.2,234.1L2299.5,315.9M301.2,234.1L2299.4,318.1M301.2,234.1L2299.3,320.5M301.2,234.1L2299.2,323.0M301.2,234.1L2299.1,325.7M301.2,234.1L2299.0,328.5M301.2,234.1L2298.8,331.6M301.2,234.1L2298.7,334.8M301.2,234.1L2298.5,338.3M301.2,234.1L2298.3,342.0M301.2,234.1L2298.1,346.0M301.2,234.1L2297.8,350.2M301.2,234.1L2297.6,354.9M301.2,234.1L2297.2,359.9M301.2,234.1L2296.9,365.4M301.2,234.1L2296.5,371.3M301.2,234.1L2296.0,377.8M301.2,234.1L2295.5,385.0M301.2,234.1L2294.9,393.0M301.2,234.1L2294.2,401.8M301.2,234.1L2293.3,411.7M301.2,234.1L2292.3,422.8M301.2,234.1L2291.0,435.4M301.2,234.1L2289.5,449.8M301.2,234.1L2287.7,466.5M301.2,234.1L2285.3,485.8M301.2,234.1L665.0,284.5M994.1,330.2L2282.3,508.8M301.2,234.1L2278.2,536.2M301.2,234.1L2272.8,569.8M301.2,234.1L2265.3,611.5M301.2,234.1L2254.3,664.9M301.2,234.1L2237.4,735.4M301.2,234.1L2209.7,832.2M301.2,234.1L2160.1,972.0M301.2,234.1L2059.9,1186.5M301.2,234.1L1823.6,1531.2M301.2,234.1L347.0,325.7M642.9,917.0L1196.0,2022.8M301.2,234.1L-40.9,2204.6M301.2,234.1L-992.3,1759.5M301.2,234.1L-1370.6,1331.9M301.2,234.1L-1519.3,1062.3M301.2,234.1L-1587.7,891.3M301.2,234.1L-1623.9,776.3M1051.4,234.5L-948.2,276.3M1051.4,234.5L-948.2,276.9M1051.4,234.5L-948.1,277.6M1051.4,234.5L-948.1,278.3M1051.4,234.5L-948.1,279.0M1051.4,234.5L-948.1,279.8M1051.4,234.5L-948.1,280.6M1051.4,234.5L-948.1,281.4M1051.4,234.5L-948.0,282.2M1051.4,234.5L-948.0,283.0M1051.4,234.5L-948.0,283.9M1051.4,234.5L-948.0,284.8M1051.4,234.5L-947.9,285.8M1051.4,234.5L-947.9,286.8M1051.4,234.5L-947.9,287.8M1051.4,234.5L-947.9,288.9M1051.4,234.5L-947.8,290.0M1051.4,234.5L-947.8,291.2M1051.4,234.5L-947.8,292.4M1051.4,234.5L-947.7,293.6M1051.4,234.5L-947.7,294.9M1051.4,234.5L-947.6,296.3M1051.4,234.5L-947.6,297.7M1051.4,234.5L-947.6,299.2M1051.4,234.5L-947.5,300.8M1051.4,234.5L-947.4,302.4M1051.4,234.5L-947.4,304.2M1051.4,234.5L-947.3,306.0M1051.4,234.5L-947.3,307.9M1051.4,234.5L-947.2,309.9M1051.4,234.5L-947.1,312.1M1051.4,234.5L-947.0,314.3M1051.4,234.5L-946.9,316.7M1051.4,234.5L-946.8,319.2M1051.4,234.5L-946.7,321.9M1051.4,234.5L-946.6,324.8M1051.4,234.5L-946.4,327.8M1051.4,234.5L-946.3,331.1M1051.4,234.5L-946.1,334.6M1051.4,234.5L-945.9,338.4M1051.4,234.5L-945.7,342.4M1051.4,234.5L-945.4,346.8M1051.4,234.5L-945.2,351.5M1051.4,234.5L-944.9,356.7M1051.4,234.5L-944.5,362.3M1051.4,234.5L-944.1,368.4M1051.4,234.5L-943.6,375.2M1051.4,234.5L-943.1,382.7M1051.4,234.5L-942.5,391.0M1051.4,234.5L-941.7,400.3M1051.4,234.5L-940.8,410.8M1051.4,234.5L-939.7,422.6M1051.4,234.5L-938.4,436.1M1051.4,234.5L-936.8,451.7M1051.4,234.5L-934.7,469.9M1051.4,234.5L665.0,284.5M347.0,325.7L-932.0,491.4M1051.4,234.5L-928.5,517.1M1051.4,234.5L-923.8,548.4M1051.4,234.5L-917.2,587.4M1051.4,234.5L-907.7,637.1M1051.4,234.5L-893.0,702.7M1051.4,234.5L-869.1,792.6M1051.4,234.5L-826.5,922.5M1051.4,234.5L-740.8,1122.3M1051.4,234.5L-537.6,1449.0M1051.4,234.5L994.1,330.2M642.9,917.0L24.2,1950.6M1051.4,234.5L1271.5,2222.3M1051.4,234.5L2319.1,1781.4M1051.4,234.5L2724.8,1329.8M1051.4,234.5L2877.1,1051.2M1051.4,234.5L2945.0,878.0M1051.4,234.5L2980.3,763.1" stroke="#6a645c" stroke-width="1" fill="none" mask="url(#gmask)" clip-path="url(#npclip)" opacity="0.55"/><polygon points="347,325.7 665,284.5 994.1,330.2 642.9,917" fill="url(#plane)" /><path d="M301.2,234.1L2300.7,280.3M301.2,234.1L2300.7,281.0M301.2,234.1L2300.6,281.7M301.2,234.1L2300.6,282.4M301.2,234.1L2300.6,283.2M301.2,234.1L2300.6,284.0M301.2,234.1L2300.6,284.8M301.2,234.1L2300.5,285.7M301.2,234.1L2300.5,286.5M301.2,234.1L2300.5,287.4M301.2,234.1L2300.5,288.4M301.2,234.1L2300.4,289.4M301.2,234.1L2300.4,290.4M301.2,234.1L2300.4,291.4M301.2,234.1L2300.3,292.5M301.2,234.1L2300.3,293.6M301.2,234.1L2300.3,294.8M301.2,234.1L2300.2,296.0M301.2,234.1L2300.2,297.3M301.2,234.1L2300.2,298.6M301.2,234.1L2300.1,300.0M301.2,234.1L2300.1,301.4M301.2,234.1L2300.0,303.0M301.2,234.1L2300.0,304.5M301.2,234.1L2299.9,306.2M301.2,234.1L2299.8,307.9M301.2,234.1L2299.8,309.8M301.2,234.1L2299.7,311.7M301.2,234.1L2299.6,313.7M301.2,234.1L2299.5,315.9M301.2,234.1L2299.4,318.1M301.2,234.1L2299.3,320.5M301.2,234.1L2299.2,323.0M301.2,234.1L2299.1,325.7M301.2,234.1L2299.0,328.5M301.2,234.1L2298.8,331.6M301.2,234.1L2298.7,334.8M301.2,234.1L2298.5,338.3M301.2,234.1L2298.3,342.0M301.2,234.1L2298.1,346.0M301.2,234.1L2297.8,350.2M301.2,234.1L2297.6,354.9M301.2,234.1L2297.2,359.9M301.2,234.1L2296.9,365.4M301.2,234.1L2296.5,371.3M301.2,234.1L2296.0,377.8M301.2,234.1L2295.5,385.0M301.2,234.1L2294.9,393.0M301.2,234.1L2294.2,401.8M301.2,234.1L2293.3,411.7M301.2,234.1L2292.3,422.8M301.2,234.1L2291.0,435.4M301.2,234.1L2289.5,449.8M301.2,234.1L2287.7,466.5M301.2,234.1L2285.3,485.8M301.2,234.1L2282.3,508.8M301.2,234.1L2278.2,536.2M301.2,234.1L2272.8,569.8M301.2,234.1L2265.3,611.5M301.2,234.1L2254.3,664.9M301.2,234.1L2237.4,735.4M301.2,234.1L2209.7,832.2M301.2,234.1L2160.1,972.0M301.2,234.1L2059.9,1186.5M301.2,234.1L1823.6,1531.2M301.2,234.1L1196.0,2022.8M301.2,234.1L-40.9,2204.6M301.2,234.1L-992.3,1759.5M301.2,234.1L-1370.6,1331.9M301.2,234.1L-1519.3,1062.3M301.2,234.1L-1587.7,891.3M301.2,234.1L-1623.9,776.3M1051.4,234.5L-948.2,276.3M1051.4,234.5L-948.2,276.9M1051.4,234.5L-948.1,277.6M1051.4,234.5L-948.1,278.3M1051.4,234.5L-948.1,279.0M1051.4,234.5L-948.1,279.8M1051.4,234.5L-948.1,280.6M1051.4,234.5L-948.1,281.4M1051.4,234.5L-948.0,282.2M1051.4,234.5L-948.0,283.0M1051.4,234.5L-948.0,283.9M1051.4,234.5L-948.0,284.8M1051.4,234.5L-947.9,285.8M1051.4,234.5L-947.9,286.8M1051.4,234.5L-947.9,287.8M1051.4,234.5L-947.9,288.9M1051.4,234.5L-947.8,290.0M1051.4,234.5L-947.8,291.2M1051.4,234.5L-947.8,292.4M1051.4,234.5L-947.7,293.6M1051.4,234.5L-947.7,294.9M1051.4,234.5L-947.6,296.3M1051.4,234.5L-947.6,297.7M1051.4,234.5L-947.6,299.2M1051.4,234.5L-947.5,300.8M1051.4,234.5L-947.4,302.4M1051.4,234.5L-947.4,304.2M1051.4,234.5L-947.3,306.0M1051.4,234.5L-947.3,307.9M1051.4,234.5L-947.2,309.9M1051.4,234.5L-947.1,312.1M1051.4,234.5L-947.0,314.3M1051.4,234.5L-946.9,316.7M1051.4,234.5L-946.8,319.2M1051.4,234.5L-946.7,321.9M1051.4,234.5L-946.6,324.8M1051.4,234.5L-946.4,327.8M1051.4,234.5L-946.3,331.1M1051.4,234.5L-946.1,334.6M1051.4,234.5L-945.9,338.4M1051.4,234.5L-945.7,342.4M1051.4,234.5L-945.4,346.8M1051.4,234.5L-945.2,351.5M1051.4,234.5L-944.9,356.7M1051.4,234.5L-944.5,362.3M1051.4,234.5L-944.1,368.4M1051.4,234.5L-943.6,375.2M1051.4,234.5L-943.1,382.7M1051.4,234.5L-942.5,391.0M1051.4,234.5L-941.7,400.3M1051.4,234.5L-940.8,410.8M1051.4,234.5L-939.7,422.6M1051.4,234.5L-938.4,436.1M1051.4,234.5L-936.8,451.7M1051.4,234.5L-934.7,469.9M1051.4,234.5L-932.0,491.4M1051.4,234.5L-928.5,517.1M1051.4,234.5L-923.8,548.4M1051.4,234.5L-917.2,587.4M1051.4,234.5L-907.7,637.1M1051.4,234.5L-893.0,702.7M1051.4,234.5L-869.1,792.6M1051.4,234.5L-826.5,922.5M1051.4,234.5L-740.8,1122.3M1051.4,234.5L-537.6,1449.0M1051.4,234.5L24.2,1950.6M1051.4,234.5L1271.5,2222.3M1051.4,234.5L2319.1,1781.4M1051.4,234.5L2724.8,1329.8M1051.4,234.5L2877.1,1051.2M1051.4,234.5L2945.0,878.0M1051.4,234.5L2980.3,763.1" stroke="#7a828b" stroke-width="1" fill="none" stroke-dasharray="3 3" clip-path="url(#pclip)" opacity="0.6"/><line x1="326" y1="240.5" x2="986" y2="411.5" stroke="#f03c64" stroke-width="1.7" clip-path="url(#npclip)"/><line x1="326" y1="240.5" x2="986" y2="411.5" stroke="#f03c64" stroke-width="1.6" clip-path="url(#pclip)" stroke-dasharray="5 1.5" opacity="0.85"/><line x1="326" y1="409.3" x2="986" y2="250.2" stroke="#2f8cf0" stroke-width="1.8" clip-path="url(#npclip)"/><line x1="326" y1="409.3" x2="986" y2="250.2" stroke="#2f8cf0" stroke-width="1.6" clip-path="url(#pclip)" stroke-dasharray="5 1.5" opacity="0.85"/><line x1="328" y1="260.5" x2="646" y2="243" stroke="#1898a8" stroke-width="3" /><line x1="434" y1="247.3" x2="646" y2="241" stroke="#1898a8" stroke-width="2" /><polygon points="464.4,273.2 504.6,270.7 521.5,273.2 478.9,276.3" fill="#f45c8e" /><polygon points="464.4,273.2 478.9,276.3 487.7,320.3 473.2,315.3" fill="#e8557c" /><polygon points="478.9,276.3 521.5,273.2 527.9,314.7 487.7,320.3" fill="#521b2c" /><polygon points="527,306 548,306 552,317 530,319" fill="#3a4752" /><polygon points="622,263 640,262 640,294 622,294" fill="#e8557c" /><ellipse cx="631" cy="263" rx="9" ry="2" fill="#f47a9a"/><polygon points="594.5,260 610,260 610,266 605,266 609,274 604,274 600,266 594.5,266" fill="#1a1c20" /><polygon points="504.8,321.9 590,302 634.7,323 549,339.4" fill="#c0ccd7" /><polygon points="504.8,321.9 549,339.4 561.4,433.7 519.5,402.3" fill="#9aa0a6" /><polygon points="549,339.4 634.7,323 634.7,400 599.8,419.7 561.4,433.7" fill="#343b43" /><polygon points="561.4,433.7 599.8,419.7 610,423 575,437" fill="#384550" /><polygon points="598,317 612,321 600,324.5" fill="#3a4752" /><polygon points="545,303.3 576.5,298.6 597.5,303.3 563.7,309.1" fill="#d24a50" /><polygon points="545,303.3 563.7,309.1 566,327.7 546.7,323" fill="#b83b3e" /><polygon points="563.7,309.1 597.5,303.3 598.6,321.9 566,327.7" fill="#3e1115" /><rect x="639.5" y="225.5" width="49" height="102" rx="24.5" fill="url(#caps)"/><rect x="639.5" y="225.5" width="49" height="102" rx="24.5" fill="url(#capsx)"/><rect x="639.5" y="225.5" width="49" height="102" rx="24.5" fill="url(#capv)"/><path d="M627,222 L672,222 L672,265 L627,265 Z M627,222 L645,204 L660,222 M672,222 L655,245 M627,265 L650,250" stroke="#c8c8c8" stroke-width="1" fill="none" opacity="0.35"/><ellipse cx="722" cy="328.5" rx="24" ry="6.5" fill="#3a4752"/><polygon points="729,346 760,347 772,354 740,357" fill="#3a4752" /><polygon points="773,436.6 853.3,469.8 802.6,530.9 689.9,532.7 767.7,468" fill="#374450" /><polygon points="596.3,359.2 684,318.4 784.2,361.7 696.4,402.5" fill="#bfcbd6" /><polygon points="596.3,359.2 696.4,402.5 690.5,531.8 604,467" fill="#9ea4aa" /><polygon points="696.4,402.5 784.2,361.7 767.7,468 690.5,531.8" fill="#343b43" /><ellipse cx="690" cy="350" rx="97" ry="98" fill="none" stroke="#d0d0d0" stroke-width="1" opacity="0.14"/><polygon points="649.4,334.5 687.7,325.9 729.7,334.5 691.4,345.7" fill="#7fd45e" stroke="#f2c230" stroke-width="1"/><polygon points="649.4,334.5 691.4,345.7 691.4,375.3 649.4,360.5" fill="#6cb446" stroke="#f2c230" stroke-width="1"/><polygon points="691.4,345.7 729.7,334.5 728.5,361.7 691.4,375.3" fill="#1f3a16" stroke="#f2c230" stroke-width="1"/><polygon points="661.7,314.7 671.6,317 671.6,328.3 661.7,326" fill="#2f86ea" /><polygon points="706.3,318 716,315.5 716,329 706.3,331" fill="#e8405e" /><line x1="623" y1="340" x2="690" y2="362" stroke="#f0406a" stroke-width="2" /><line x1="691" y1="362" x2="748" y2="340" stroke="#3d8ee8" stroke-width="2" /><polygon points="606.8,335.4 624.3,332.4 622,344" fill="#f0406a" /><ellipse cx="751" cy="339.5" rx="5.5" ry="5" fill="#3d8ee8"/><polygon points="743,336 752,334 752,345 744,343" fill="#3d8ee8" /><line x1="693" y1="238" x2="690.5" y2="362" stroke="#88d22a" stroke-width="2.2" /><polygon points="693,202 686,238.6 701.8,238.6" fill="#88d22a" /><line x1="664.6" y1="155" x2="664.6" y2="226" stroke="#88d22a" stroke-width="1.5" /><path d="M721.4,272.6 C712,268 700,266.5 692.6,267.4 C680,268 665,274 656,283 C646,292 640,300 637.6,306.7 C632,318 628,326 624.6,334.5 C620,350 618,365 619.2,376.6 C619,395 620,405 623.4,413.7 C630,428 640,437 650.6,440.9" fill="none" stroke="#f0406a" stroke-width="3"/><path d="M656,279.2 C665,272 672,269.5 679.5,268.7 C688,267.5 695,267 700.5,267.4 C712,268.5 720,272 726.7,277.9 C736,284 742,291 747.6,298.8 C754,310 758,318 760.7,327.6 C764,345 767,360 766.8,376.6 C767,390 765,400 763.1,408.7 C759,420 754,426 748.3,431 C740,437 730,441 721,443.4" fill="none" stroke="#3d8ee8" stroke-width="3"/><path d="M598.7,361.7 C600,370 606,377 612.3,381.5 C625,390 640,393 651.8,395.1 C665,398 680,400 693.9,400 C710,400 725,397 738.4,393.9 C752,390 763,386 770.6,381.5 C776,378 780,375 780.4,371.6 C781,368 780,364 778,361.7" fill="none" stroke="#88d22a" stroke-width="3"/><line x1="935" y1="203" x2="935.3" y2="178" stroke="#88d22a" stroke-width="2.5" /><line x1="935" y1="203" x2="915" y2="195.6" stroke="#d46a7a" stroke-width="2.5" /><line x1="935" y1="203" x2="957" y2="195.6" stroke="#5aa0e0" stroke-width="2.5" /><circle cx="915" cy="195.6" r="8.5" fill="#d46a7a"/><text x="915" y="200" font-size="11" text-anchor="middle" fill="#8a3040" font-family="Liberation Sans">X</text><circle cx="957" cy="195.6" r="8.5" fill="#5a9ae0"/><text x="957" y="200" font-size="11" text-anchor="middle" fill="#2a4a80" font-family="Liberation Sans">Z</text><circle cx="935.3" cy="178" r="9.5" fill="#88d22a"/><text x="935.3" y="182.5" font-size="11" text-anchor="middle" fill="#2a4010" font-family="Liberation Sans">Y</text><circle cx="914.4" cy="213.4" r="7.5" fill="#1f5fa8" stroke="#4a94e8" stroke-width="1.5"/><circle cx="956.3" cy="213.4" r="7.5" fill="#a0203a" stroke="#e8405e" stroke-width="1.5"/><circle cx="935.3" cy="232.6" r="7.5" fill="#5a9a20" stroke="#88d22a" stroke-width="1.5"/><rect x="336" y="165" width="139" height="29" rx="3" fill="#3a3f48" opacity="0.55"/><circle cx="348" cy="173" r="2" fill="#e0e0e0"/><circle cx="348" cy="179" r="2" fill="#e0e0e0"/><circle cx="348" cy="185" r="2" fill="#e0e0e0"/></svg>
<div class="t" style="left:360px;top:170.93px;font-size:15px;color:#e0e0e0;">Перспективный</div>
<div style="left:326px;top:155px;width:660px;height:478px;background:transparent;border-radius:0px;border:2px solid #6ea0d2;"></div>
</body></html>
